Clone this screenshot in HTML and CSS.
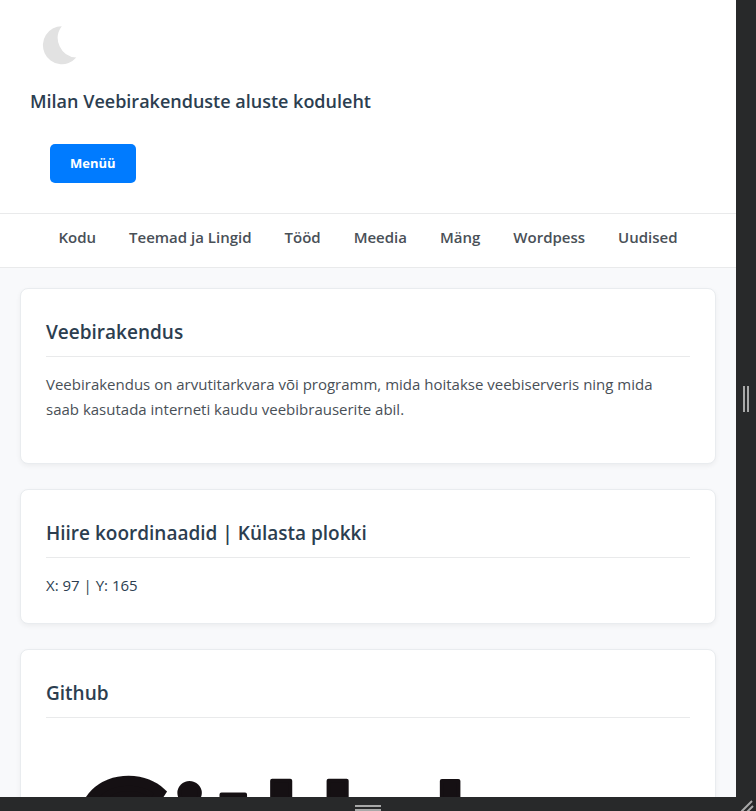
FILE: index.html
```html
<!DOCTYPE html>
<html lang="et">
<head>
    <meta charset="UTF-8">
    <meta name="viewport" content="width=device-width, initial-scale=1.0">
    <title>Milan Veebirakenduste aluste koduleht</title>
    <link rel="stylesheet" href="styles.css">
</head>
<body>
    <div class="device">
        <div class="screen">
            <header class="header">
                <button class="theme-toggle" type="button" aria-label="Tume režiim">
                    <svg width="40" height="40" viewBox="0 0 40 40">
                        <path d="M21.8 1.2 A19 19 0 1 0 36.3 32.6 A19.6 19.6 0 0 1 21.8 1.2 Z" fill="#e2e2e2"/>
                    </svg>
                </button>
                <h1>Milan Veebirakenduste aluste koduleht</h1>
                <button class="menu-btn" type="button">Menüü</button>
            </header>

            <nav class="nav">
                <a href="#">Kodu</a>
                <a href="#">Teemad ja Lingid</a>
                <a href="#">Tööd</a>
                <a href="#">Meedia</a>
                <a href="#">Mäng</a>
                <a href="#">Wordpess</a>
                <a href="#">Uudised</a>
            </nav>

            <main class="content">
                <section class="card">
                    <h2>Veebirakendus</h2>
                    <p>Veebirakendus on arvutitarkvara või programm, mida hoitakse veebiserveris ning mida saab kasutada interneti kaudu veebibrauserite abil.</p>
                </section>

                <section class="card">
                    <h2>Hiire koordinaadid | Külasta plokki</h2>
                    <div class="coords">X: 97 | Y: 165</div>
                </section>

                <section class="card">
                    <h2>Github</h2>
                    <a class="logo" href="#">
                        <svg viewBox="0 0 644 300">
                            <text x="33 128 166 217 314 389" y="136 140 143 135 136 138"><tspan class="logo-g">G</tspan>i<tspan class="logo-t">t</tspan>Hub</text>
                        </svg>
                    </a>
                </section>
            </main>
        </div>

        <!-- Resize handles -->
        <div class="handle handle-right"><span></span></div>
        <div class="handle handle-bottom"><span></span></div>
        <div class="handle handle-corner">
            <svg width="15" height="12" viewBox="0 0 15 12">
                <path d="M0 13 L11 2 M6 13 L12 7" stroke="#a8a8a8" stroke-width="2"/>
            </svg>
        </div>
    </div>
</body>
</html>
```
FILE: styles.css
```css
* {
    margin: 0;
    padding: 0;
    box-sizing: border-box;
}
body {
    font-family: "Segoe UI", "Open Sans", "Noto Sans", sans-serif;
    font-size: 15px;
    line-height: 25px;
    color: #2c3e50;
    background-color: #28292a;
}
.device {
    display: grid;
    grid-template-columns: minmax(0, 1fr) 20px;
    grid-template-rows: minmax(0, 1fr) 14px;
    height: 100vh;
}
.screen {
    overflow: hidden;
    background-color: #f8f9fb;
}
.header {
    display: flex;
    flex-direction: column;
    align-items: flex-start;
    padding: 20px 30px 30px;
    background-color: #fff;
    border-bottom: 1px solid #e9eaeb;
}
.theme-toggle {
    padding: 5px 10px;
    border: none;
    background: none;
    cursor: pointer;
}
.theme-toggle svg {
    display: block;
}
h1 {
    margin-top: 15px;
    font-size: 18px;
    line-height: 32px;
    font-weight: 600;
}
.menu-btn {
    margin: 27px 20px 0;
    padding: 0 20px;
    border: none;
    border-radius: 5px;
    font-family: inherit;
    font-size: 13px;
    line-height: 39px;
    font-weight: 700;
    color: #fff;
    background-color: #007bff;
    cursor: pointer;
}
.nav {
    display: flex;
    justify-content: center;
    gap: 33px;
    padding: 11px 20px 17px;
    background-color: #fff;
    border-bottom: 1px solid #e9eaeb;
}
.nav a {
    font-weight: 600;
    color: #495057;
    text-decoration: none;
    white-space: nowrap;
}
.content {
    display: flex;
    flex-direction: column;
    gap: 25px;
    padding: 20px;
}
.card {
    padding: 25px;
    background-color: #fff;
    border: 1px solid #e9ecef;
    border-radius: 8px;
    box-shadow: 0 2px 5px rgba(0, 0, 0, 0.05);
}
.card h2 {
    margin-bottom: 15px;
    padding: 1px 0 7px;
    border-bottom: 1px solid #e9eaeb;
    font-size: 19px;
    line-height: 34px;
    font-weight: 600;
}
.card p {
    margin-bottom: 16px;
    padding-right: 10px;
    color: #495057;
}
.logo svg {
    display: block;
    width: 100%;
}
.logo text {
    font-family: Lato, sans-serif;
    font-size: 120px;
    font-weight: 900;
    fill: #151013;
    stroke: #151013;
    stroke-width: 4px;
    stroke-linejoin: round;
}
.logo .logo-g {
    stroke-width: 10px;
    stroke-linejoin: miter;
}
.logo .logo-t {
    font-family: Inter, sans-serif;
}
.handle {
    display: flex;
    align-items: center;
    justify-content: center;
    background-color: #28292a;
}
.handle-right span {
    width: 6px;
    height: 26px;
    border: solid #a8a8a8;
    border-width: 0 2px;
}
.handle-bottom {
    align-items: flex-end;
}
.handle-bottom span {
    width: 26px;
    height: 6px;
    border: solid #a8a8a8;
    border-width: 2px 0;
}
.handle-corner {
    align-items: flex-end;
    justify-content: flex-end;
}
```
